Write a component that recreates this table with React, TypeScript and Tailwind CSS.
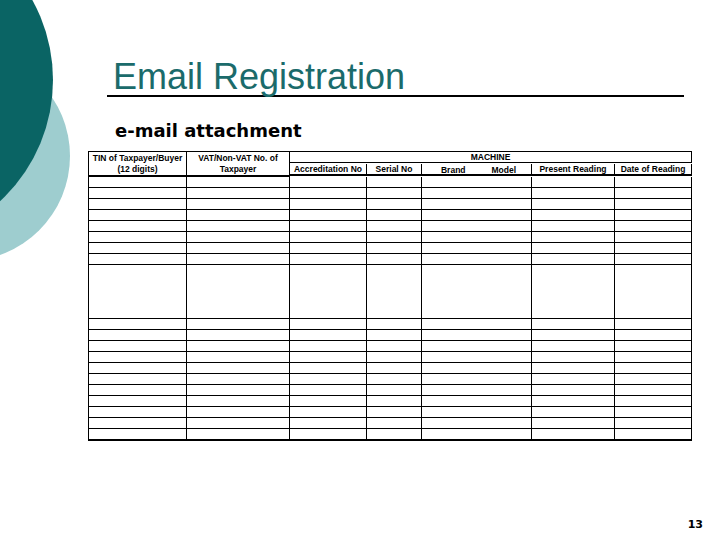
import React from 'react'

// column widths of the attachment form (each includes its right border)
const cols = 'grid grid-cols-[98px_103px_77px_55px_110px_83px_77px]'

// body rows: 8 short rows, one tall row, 11 short rows
const rows: number[] = [
  ...Array(8).fill(11),
  54,
  ...Array(11).fill(11),
]

function Decoration() {
  return (
    <svg className="absolute left-0 top-0" width="140" height="300" viewBox="0 0 140 300">
      <circle cx="-35" cy="156" r="105" fill="#9ecdcf" />
      <circle cx="-112" cy="80" r="165" fill="#0a6464" />
    </svg>
  )
}

function HeaderRow() {
  const cell = 'border-r border-black flex items-center justify-center whitespace-nowrap'
  return (
    <div className={cols}>
      <div className="row-span-2 border-r border-b-2 border-black flex flex-col items-center leading-[11px] pt-px">
        <span>TIN of Taxpayer/Buyer</span>
        <span>(12 digits)</span>
      </div>
      <div className="row-span-2 border-r border-b-2 border-black flex flex-col items-center leading-[11px] pt-px">
        <span>VAT/Non-VAT No. of</span>
        <span>Taxpayer</span>
      </div>
      <div className={`col-span-5 h-[11px] border-b ${cell}`}>MACHINE</div>
      <div className={`h-[12px] border-b-2 ${cell}`}>Accreditation No</div>
      <div className={`h-[12px] border-b-2 ${cell}`}>Serial No</div>
      <div className="h-[12px] border-b-2 border-r border-black flex">
        <span className="flex-1 text-center pl-[6px]">Brand</span>
        <span className="flex-1 text-center pr-[2px]">Model</span>
      </div>
      <div className={`h-[12px] border-b-2 ${cell}`}>Present Reading</div>
      <div className={`h-[12px] border-b-2 ${cell}`}>Date of Reading</div>
    </div>
  )
}

function AttachmentTable() {
  return (
    <div className="w-[604px] border-l border-t border-black text-[8.5px] font-bold text-black font-['Liberation_Sans',Arial,sans-serif]">
      <HeaderRow />
      {rows.map((h, i) => {
        const last = i === rows.length - 1
        return (
          <div key={i} className={cols}>
            {Array.from({ length: 7 }).map((_, j) => (
              <div
                key={j}
                style={{ height: last ? h + 1 : h }}
                className={`border-r border-black ${last ? 'border-b-2' : 'border-b'}`}
              />
            ))}
          </div>
        )
      })}
    </div>
  )
}

export default function App() {
  return (
    <div className="relative w-[720px] h-[540px] bg-white overflow-hidden flex flex-col">
      <Decoration />

      {/* Title */}
      <div className="relative pl-[107px] pt-[59px]">
        <h1 className="pl-[6px] text-[36px] leading-none text-[#1b6b6b] font-['Liberation_Sans',Arial,sans-serif]">
          Email Registration
        </h1>
        <div className="h-[2px] w-[577px] bg-black" />
        <p className="mt-[25px] pl-[8px] text-[18px] leading-[18px] font-bold text-black font-['DejaVu_Sans',Verdana,sans-serif]">
          e-mail attachment
        </p>
      </div>

      {/* Form */}
      <div className="relative pl-[88px] mt-[11px]">
        <AttachmentTable />
      </div>

      <div className="flex-1" />

      {/* Page number */}
      <div className="flex justify-end pr-[17px] pb-[10px]">
        <span className="text-[11px] leading-[11px] font-bold text-black font-['DejaVu_Sans',Verdana,sans-serif]">
          13
        </span>
      </div>
    </div>
  )
}
